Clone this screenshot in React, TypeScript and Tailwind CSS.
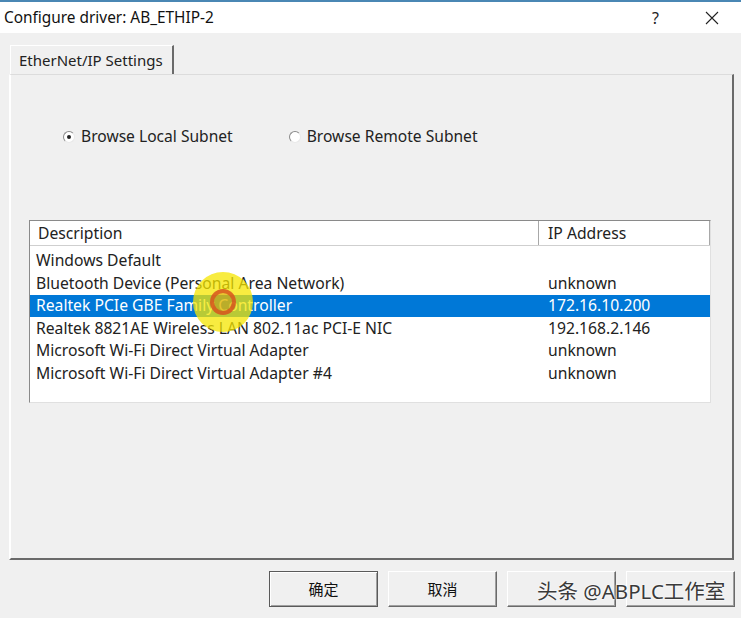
const ROWS: { desc: string; ip: string; selected?: boolean }[] = [
  { desc: "Windows Default", ip: "" },
  { desc: "Bluetooth Device (Personal Area Network)", ip: "unknown" },
  { desc: "Realtek PCIe GBE Family Controller", ip: "172.16.10.200", selected: true },
  { desc: "Realtek 8821AE Wireless LAN 802.11ac PCI-E NIC", ip: "192.168.2.146" },
  { desc: "Microsoft Wi-Fi Direct Virtual Adapter", ip: "unknown" },
  { desc: "Microsoft Wi-Fi Direct Virtual Adapter #4", ip: "unknown" },
];

function Radio({ checked, label }: { checked?: boolean; label: string }) {
  return (
    <div className="flex items-center gap-[6px]">
      <span className="flex h-[12px] w-[12px] items-center justify-center rounded-full border border-l-[#8a8a8a] border-t-[#8a8a8a] border-r-[#e8e8e8] border-b-[#e8e8e8] bg-white">
        {checked && <span className="h-[4px] w-[4px] rounded-full bg-[#222]" />}
      </span>
      <span className="text-[15.6px] text-[#222]">{label}</span>
    </div>
  );
}

function Button({ label, isDefault }: { label?: string; isDefault?: boolean }) {
  return (
    <div
      className={`flex h-[36px] w-[109px] items-center justify-center border bg-[#f0f0f0] text-[15px] text-[#111] ${
        isDefault
          ? "border-[#5a5a5a] shadow-[inset_1px_1px_0_#fff,inset_-1px_-1px_0_#a0a0a0]"
          : "border-t-white border-l-white border-r-[#6a6a6a] border-b-[#6a6a6a] shadow-[inset_-1px_-1px_0_#a0a0a0]"
      }`}
    >
      {label}
    </div>
  );
}

export default function App() {
  return (
    <div
      className="relative h-[618px] w-[741px] overflow-hidden bg-[#f0f0f0] text-[#222]"
      style={{ fontFamily: '"Noto Sans", "Noto Sans CJK SC", sans-serif' }}
    >
      {/* title bar */}
      <div className="flex h-[33px] items-center justify-between border-t-2 border-[#4a87b4] bg-white pl-[4px] pr-[22px]">
        <span className="text-[15.4px] text-[#111]">Configure driver: AB_ETHIP-2</span>
        <div className="flex items-center gap-[46px] text-[#222]">
          <span className="text-[16px]">?</span>
          <svg width="14" height="14" viewBox="0 0 14 14" fill="none" stroke="#222" strokeWidth="1.1">
            <path d="M1 1 L13 13 M13 1 L1 13" />
          </svg>
        </div>
      </div>

      {/* tab */}
      <div className="ml-[10px] mt-[12px] flex h-[29px] w-[164px] items-center border-l border-t border-r-2 border-l-white border-t-white border-r-[#6a6a6a] pl-[8px] text-[15px] text-[#222]">
        EtherNet/IP Settings
      </div>

      {/* tab panel */}
      <div className="ml-[9px] mr-[7px] flex h-[486px] flex-col border-l-2 border-t border-r-2 border-b-2 border-l-white border-t-[#dcdcdc] border-r-[#6a6a6a] border-b-[#6a6a6a]">
        <div className="ml-[52px] mt-[50px] flex items-center gap-[56px]">
          <Radio checked label="Browse Local Subnet" />
          <Radio label="Browse Remote Subnet" />
        </div>

        {/* list */}
        <div className="ml-[18px] mt-[72px] h-[183px] w-[682px] border-l border-t border-r border-b border-l-[#8a8a8a] border-t-[#8a8a8a] border-r-[#e0e0e0] border-b-[#e0e0e0] bg-white">
          <div className="flex h-[25px] border-b border-[#cfcfcf] bg-white text-[15.7px] text-[#222]">
            <div className="flex w-[509px] items-center border-r border-[#a8a8a8] pl-[8px]">Description</div>
            <div className="flex w-[171px] items-center border-r border-[#a8a8a8] pl-[9px]">IP Address</div>
          </div>
          <div className="pt-[3px]">
            {ROWS.map((r) => (
              <div
                key={r.desc}
                className={`flex h-[22.6px] items-center text-[15.7px] ${
                  r.selected ? "bg-[#0078d7] text-white" : "text-[#222]"
                }`}
              >
                <div className="w-[509px] pl-[6px]">{r.desc}</div>
                <div className="pl-[9px]">{r.ip}</div>
              </div>
            ))}
          </div>
        </div>
      </div>

      {/* buttons */}
      <div className="ml-[269px] mt-[11px] flex gap-[10px]">
        <Button label="确定" isDefault />
        <Button label="取消" />
        <Button />
        <Button />
      </div>

      {/* cursor highlight */}
      <div className="pointer-events-none absolute left-[193px] top-[272px] flex h-[60px] w-[60px] items-center justify-center rounded-full bg-[#f5e600]/75">
        <div className="h-[26px] w-[26px] rounded-full border-[4px] border-[#d9531e]/80 bg-[#c06a10]/30" />
      </div>

      {/* watermark */}
      <div
        className="pointer-events-none absolute left-[537px] top-[576px] text-[20.5px] text-[#3a3a3a]"
        style={{ textShadow: "0 0 2px #fff, 0 0 2px #fff" }}
      >
        头条 @ABPLC工作室
      </div>
    </div>
  );
}
